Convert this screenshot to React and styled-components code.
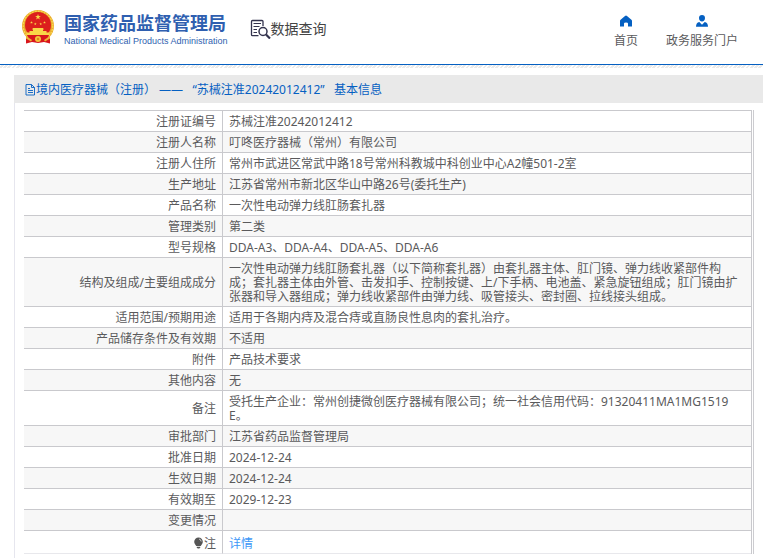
import React from 'react';
import styled, { createGlobalStyle } from 'styled-components';

const GlobalStyle = createGlobalStyle`
  * {
    box-sizing: border-box;
  }

  body {
    margin: 0;
    background: #fff;
    color: #5a5a5c;
    font-family: 'Noto Sans', 'Noto Sans CJK SC', sans-serif;
    font-size: 12px;
    line-height: 14px;
  }
`;

const Header = styled.header`
  display: flex;
  align-items: flex-start;
  height: 65px;
  border-bottom: 1px solid #0560c2;
`;

const Brand = styled.a`
  display: flex;
  gap: 9px;
  padding: 9px 0 0 21px;
  color: #2f5fb0;
  text-decoration: none;
`;

const BrandText = styled.div`
  display: flex;
  flex-direction: column;
  white-space: nowrap;
`;

const BrandName = styled.strong`
  font-family: 'Noto Sans CJK SC', sans-serif;
  font-size: 18px;
  font-weight: 700;
  line-height: 26px;
`;

const BrandSub = styled.span`
  font-family: 'Liberation Sans', Arial, sans-serif;
  font-size: 9px;
  line-height: 12px;
`;

const Query = styled.div`
  display: flex;
  align-items: center;
  margin: 18px 0 0 22px;
  color: #444;
  font-size: 14px;
  line-height: 20px;
  white-space: nowrap;
`;

const Nav = styled.nav`
  display: flex;
  gap: 28px;
  margin-left: auto;
  padding: 15px 25px 0 0;
`;

const NavLink = styled.a`
  display: flex;
  flex-direction: column;
  align-items: center;
  gap: 7px;
  color: #5a5a5c;
  text-decoration: none;
  white-space: nowrap;
`;

// 导航下方的斜纹
const Hatch = styled.div`
  height: 3px;
  background: repeating-linear-gradient(135deg, #fff 0 1px, #ebebeb 1px 3px);
`;

const Panel = styled.main`
  margin: 7px 0 0 14px;
  border-left: 1px solid #e6e6ee;
`;

const PanelTitle = styled.h1`
  display: flex;
  align-items: center;
  height: 28px;
  margin: 0 0 0 -1px;
  padding: 1px 11px 0;
  background: #e9e9e9;
  color: #0560c2;
  font-size: 12px;
  font-weight: 400;
  white-space: pre;
`;

const PanelBody = styled.div`
  padding: 7px 9px 4px;
`;

const TableFrame = styled.div`
  padding-right: 1px;
  border-right: 1px solid #ccccd0;
`;

const Table = styled.table`
  width: 100%;
  table-layout: fixed;
  border-collapse: separate;
  border-spacing: 0;
  border-top: 1px solid #c9c9cd;
  border-right: 1px solid #c9c9cd;
`;

const Row = styled.tr`
  background: #fff;

  &:nth-child(even) {
    background: #f7f7f7;
  }

  > * {
    height: 21px;
    padding: ${(p) => (p.$last ? '6px 6px 2px' : '4px 6px 2px')};
    border-bottom: 1px solid ${(p) => (p.$last ? '#e8e8ec' : '#c9c9cd')};
    font-weight: 400;
    vertical-align: middle;
  }

  > td {
    padding-right: 8px;
  }
`;

const Label = styled.th`
  width: 199px;
  border-right: 1px solid #c9c9cd;
  text-align: right;

  svg {
    vertical-align: -1px;
  }
`;

const Value = styled.td`
  text-align: left;
  word-break: break-all;
`;

const DetailLink = styled.a`
  color: #3d97f7;
  text-decoration: none;
`;

const STAR = '0,-1 0.24,-0.31 0.95,-0.31 0.38,0.12 0.59,0.81 0,0.4 -0.59,0.81 -0.38,0.12 -0.95,-0.31 -0.24,-0.31';

const Emblem = () => (
  <svg width="34" height="36" viewBox="0 0 34 36" aria-hidden="true">
    <path d="M5 25 L5 34.500 L11 33 L17 34 L23 33 L29 34.500 L29 25Z" fill="#d8151c" />
    <circle cx="17" cy="17" r="16" fill="#e9a92d" />
    <circle cx="17" cy="17" r="14.800" fill="none" stroke="#f8d64e" strokeWidth="1.400" strokeDasharray="2 1" />
    <circle cx="17" cy="16" r="13" fill="#dc1f1d" />
    <g fill="#f9d648">
      <polygon points={STAR} transform="translate(17 8) scale(3)" />
      <polygon points={STAR} transform="translate(10.5 13.5) scale(1.4)" />
      <polygon points={STAR} transform="translate(14.3 15) scale(1.4)" />
      <polygon points={STAR} transform="translate(19.7 15) scale(1.4)" />
      <polygon points={STAR} transform="translate(23.5 13.5) scale(1.4)" />
      <path d="M12 19h10l1 1.400h-1V22h3.500v1.500H29l-1 2.500H6l-1-2.500h3.500V22H12v-1.600h-1z" />
    </g>
    <path d="M6 26h22l-3 7H9z" fill="#d8151c" />
    <circle cx="17" cy="30" r="3" fill="#f4c63c" />
    <circle cx="17" cy="30" r="1.300" fill="#dc8a18" />
    <path d="M5 27l6 4-1 1.500-5-3zM29 27l-6 4 1 1.500 5-3z" fill="#ecb534" />
  </svg>
);

const QueryIcon = () => (
  <svg width="21" height="21" viewBox="0 0 21 21" fill="none" stroke="#33334d" aria-hidden="true">
    <path d="M8.500 17.700H2.500q-1 0-1-1V3.500q0-1 1-1h9.500q1 0 1 1v4.500" strokeWidth="1.300" />
    <path d="M3.500 5.500h7.500M3.500 8.500h6M3.500 11.500h3.500M3.500 14.500h3.500" strokeWidth="1" />
    <circle cx="13" cy="13.500" r="4" strokeWidth="1.500" />
    <path d="M16 16.500l4 4" strokeWidth="2.200" />
  </svg>
);

const HomeIcon = () => (
  <svg width="12" height="12" viewBox="0 0 12 12" fill="#0560c2" aria-hidden="true">
    <path d="M6 .6Q6.500 .6 7 1L11.400 4.800Q12 5.300 12 6V11.500H8V8.500Q8 7.500 6 7.500T4 8.500V11.500H0V6Q0 5.300 .6 4.800L5 1Q5.500 .6 6 .6Z" />
  </svg>
);

const UserIcon = () => (
  <svg width="12" height="12" viewBox="0 0 12 12" fill="#0560c2" aria-hidden="true">
    <path d="M6 0a3 3 0 0 1 3 3.100c0 2-1.300 3.500-3 3.500S3 5.100 3 3.100A3 3 0 0 1 6 0z" />
    <path d="M3.300 7l2.700 2.800L8.700 7q3.300.8 3.300 4.800H0Q0 7.800 3.300 7z" />
  </svg>
);

const DocIcon = () => (
  <svg width="11" height="12" viewBox="0 0 11 12" fill="none" stroke="#0560c2" aria-hidden="true">
    <path d="M1 .5h5.500l3 3v7.500h-8.500zM6.500 .5v3h3M3 4.500h2M3 6.500h5M3 8.500h5" strokeWidth="0.900" />
  </svg>
);

const BulbIcon = () => (
  <svg width="11" height="12" viewBox="0 0 10 12" aria-hidden="true">
    <path d="M5 .5a4.300 4.300 0 0 1 4.300 4.300c0 2-1.300 2.700-2 4.200H2.700c-.7-1.500-2-2.200-2-4.200A4.300 4.300 0 0 1 5 .5z" fill="#555" />
    <path d="M3.300 9.800h3.400v.7L5.800 11.500H4.200l-.9-1z" fill="#555" />
    <path d="M5.500 2q2 .4 2.200 2.500" fill="none" stroke="#fff" strokeWidth="0.700" />
  </svg>
);

const rows = [
  ['注册证编号', '苏械注准20242012412'],
  ['注册人名称', '叮咚医疗器械（常州）有限公司'],
  ['注册人住所', '常州市武进区常武中路18号常州科教城中科创业中心A2幢501-2室'],
  ['生产地址', '江苏省常州市新北区华山中路26号(委托生产)'],
  ['产品名称', '一次性电动弹力线肛肠套扎器'],
  ['管理类别', '第二类'],
  ['型号规格', 'DDA-A3、DDA-A4、DDA-A5、DDA-A6'],
  [
    '结构及组成/主要组成成分',
    '一次性电动弹力线肛肠套扎器（以下简称套扎器）由套扎器主体、肛门镜、弹力线收紧部件构成；套扎器主体由外管、击发扣手、控制按键、上/下手柄、电池盖、紧急旋钮组成；肛门镜由扩张器和导入器组成；弹力线收紧部件由弹力线、吸管接头、密封圈、拉线接头组成。',
  ],
  ['适用范围/预期用途', '适用于各期内痔及混合痔或直肠良性息肉的套扎治疗。'],
  ['产品储存条件及有效期', '不适用'],
  ['附件', '产品技术要求'],
  ['其他内容', '无'],
  ['备注', '受托生产企业：常州创捷微创医疗器械有限公司；统一社会信用代码：91320411MA1MG1519E。'],
  ['审批部门', '江苏省药品监督管理局'],
  ['批准日期', '2024-12-24'],
  ['生效日期', '2024-12-24'],
  ['有效期至', '2029-12-23'],
  ['变更情况', ''],
];

export default function App() {
  return (
    <>
      <GlobalStyle />
      <Header>
        <Brand href="#">
          <Emblem />
          <BrandText>
            <BrandName>国家药品监督管理局</BrandName>
            <BrandSub>National Medical Products Administration</BrandSub>
          </BrandText>
        </Brand>
        <Query>
          <QueryIcon />
          数据查询
        </Query>
        <Nav>
          <NavLink href="#">
            <HomeIcon />
            首页
          </NavLink>
          <NavLink href="#">
            <UserIcon />
            政务服务门户
          </NavLink>
        </Nav>
      </Header>
      <Hatch />

      <Panel>
        <PanelTitle>
          <DocIcon />
          境内医疗器械（注册） ——   “苏械注准20242012412”   基本信息
        </PanelTitle>
        <PanelBody>
          <TableFrame>
            <Table>
              <tbody>
                {rows.map(([label, value]) => (
                  <Row key={label}>
                    <Label scope="row">{label}</Label>
                    <Value>{value}</Value>
                  </Row>
                ))}
                <Row $last>
                  <Label scope="row">
                    <BulbIcon />注
                  </Label>
                  <Value>
                    <DetailLink href="#">详情</DetailLink>
                  </Value>
                </Row>
              </tbody>
            </Table>
          </TableFrame>
        </PanelBody>
      </Panel>
    </>
  );
}
